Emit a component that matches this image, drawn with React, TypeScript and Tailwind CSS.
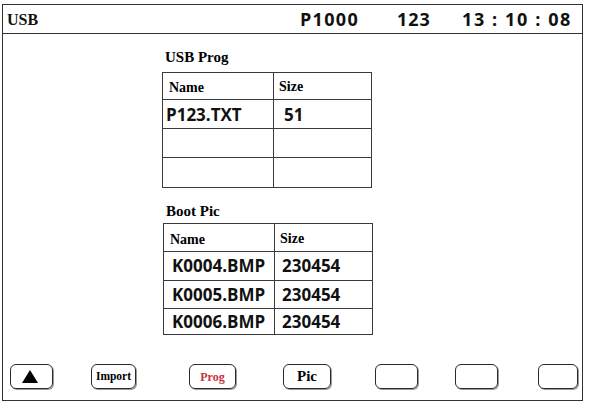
import React from "react";

const serif = "font-['Liberation_Serif','Times_New_Roman',serif] font-bold";
const sans = "font-['Open_Sans','Liberation_Sans',sans-serif] font-bold";

type Row = { name: string; size: string };

function FileTable({
  rows,
  heights,
  namePad,
  sizePad,
}: {
  rows: Row[];
  heights: string[];
  namePad: string;
  sizePad: string;
}) {
  return (
    <div className="flex w-[210px] flex-col border-l border-t border-[#3a3a3a]">
      <div className={`flex ${heights[0]}`}>
        <div className={`flex w-[111px] items-center border-b border-r border-[#3a3a3a] pl-[6px] pt-[3px] text-[14px] ${serif}`}>
          Name
        </div>
        <div className={`flex w-[98px] items-center border-b border-r border-[#3a3a3a] pl-[5px] pt-[1px] text-[14px] ${serif}`}>
          Size
        </div>
      </div>
      {rows.map((row, i) => (
        <div key={i} className={`flex ${heights[i + 1]}`}>
          <div className={`flex w-[111px] items-center border-b border-r border-[#3a3a3a] ${namePad} text-[17px] text-[#111] ${sans}`}>
            {row.name}
          </div>
          <div className={`flex w-[98px] items-center border-b border-r border-[#3a3a3a] ${sizePad} text-[17px] text-[#111] ${sans}`}>
            {row.size}
          </div>
        </div>
      ))}
    </div>
  );
}

function SoftKey({ children, className }: { children?: React.ReactNode; className: string }) {
  return (
    <div
      className={`flex h-[25px] items-center justify-center rounded-[6px] border border-[#2a2a2a] shadow-[1px_1px_0_#9a9a9a] ${className}`}
    >
      {children}
    </div>
  );
}

export default function App() {
  return (
    <div className="h-[403px] w-[590px] bg-white pl-[2px] pt-[4px]">
      <div className="flex h-[397px] w-[581px] flex-col border border-[#333]">
        {/* title bar */}
        <div className="flex h-[29px] items-center border-b border-[#333] text-[#111]">
          <div className={`w-[297px] pl-[4px] pt-[1px] text-[16px] ${serif}`}>USB</div>
          <div className={`w-[97px] text-[18px] tracking-[1.3px] ${sans}`}>P1000</div>
          <div className={`w-[65px] text-[18px] tracking-[1px] ${sans}`}>123</div>
          <div className={`whitespace-pre text-[18px] tracking-[1.6px] ${sans}`}>13 : 10 : 08</div>
        </div>

        <div className="flex flex-1 flex-col">
          <div className="ml-[159px] mt-[14px]">
            <div className={`mb-[6px] pl-[3px] text-[15px] leading-[18px] ${serif}`}>USB Prog</div>
            <FileTable
              rows={[
                { name: "P123.TXT", size: "51" },
                { name: "", size: "" },
                { name: "", size: "" },
              ]}
              heights={["h-[27px]", "h-[29px]", "h-[29px]", "h-[30px]"]}
              namePad="pl-[3px] pt-[1px]"
              sizePad="pl-[10px] pt-[1px]"
            />
          </div>

          <div className="ml-[160px] mt-[14px]">
            <div className={`mb-[3px] pl-[3px] text-[15px] leading-[18px] ${serif}`}>Boot Pic</div>
            <FileTable
              rows={[
                { name: "K0004.BMP", size: "230454" },
                { name: "K0005.BMP", size: "230454" },
                { name: "K0006.BMP", size: "230454" },
              ]}
              heights={["h-[28px]", "h-[29px]", "h-[28px]", "h-[26px]"]}
              namePad="pl-[8px]"
              sizePad="pl-[7px]"
            />
          </div>
        </div>

        {/* soft keys */}
        <div className="flex items-end pb-[11px] pl-[7px]">
          <SoftKey className="w-[43px]">
            <svg width="16" height="13" viewBox="0 0 16 13" className="-ml-[3px]">
              <polygon points="8,0 16,13 0,13" fill="#000" />
            </svg>
          </SoftKey>
          <SoftKey className={`ml-[38px] w-[45px] text-[11.5px] ${serif}`}>Import</SoftKey>
          <SoftKey className={`ml-[53px] w-[47px] text-[12px] text-[#c8323c] ${serif}`}>Prog</SoftKey>
          <SoftKey className={`ml-[47px] w-[48px] text-[15px] ${serif}`}>Pic</SoftKey>
          <SoftKey className="ml-[44px] w-[43px]" />
          <SoftKey className="ml-[37px] w-[43px]" />
          <SoftKey className="ml-[40px] w-[40px]" />
        </div>
      </div>
    </div>
  );
}
